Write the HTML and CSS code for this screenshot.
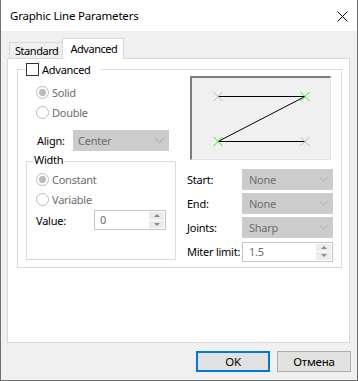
FILE: index.html
```html
<!DOCTYPE html>
<html lang="en">
<head>
    <meta charset="utf-8">
    <title>Graphic Line Parameters</title>
    <link rel="stylesheet" href="styles.css">
</head>
<body>
    <div class="window">
        <div class="titlebar">
            <span class="title">Graphic Line Parameters</span>
            <svg class="close" width="11" height="11" viewBox="0 0 11 11">
                <path d="M0.5 0.5 L10.5 10.5 M10.5 0.5 L0.5 10.5" stroke="#000" stroke-width="1"/>
            </svg>
        </div>
        <div class="client">
            <div class="tabs">
                <div class="tab">Standard</div>
                <div class="tab active">Advanced</div>
            </div>
            <div class="panel">
                <div class="group">
                    <div class="legend">
                        <span class="check"></span>
                        <span>Advanced</span>
                    </div>

                    <div class="col-left">
                        <div class="radios">
                            <div class="radio-row"><span class="radio on"></span><span class="dim">Solid</span></div>
                            <div class="radio-row"><span class="radio"></span><span class="dim">Double</span></div>
                        </div>
                        <div class="align-row">
                            <span class="align-label">Align:</span>
                            <div class="select wide">
                                <span>Center</span>
                                <svg class="chev" width="9" height="5" viewBox="0 0 9 5"><path d="M0.5 0.5 L4.5 4.5 L8.5 0.5" fill="none" stroke="#a6a6a6"/></svg>
                            </div>
                        </div>
                        <div class="subgroup">
                            <div class="sublegend">Width</div>
                            <div class="sub-radios">
                                <div class="radio-row"><span class="radio on"></span><span class="dim">Constant</span></div>
                                <div class="radio-row"><span class="radio"></span><span class="dim">Variable</span></div>
                            </div>
                            <div class="value-row">
                                <span class="value-label">Value:</span>
                                <div class="spin short">
                                    <span class="spin-text">0</span>
                                    <div class="spin-btns">
                                        <span class="up"></span>
                                        <span class="down"></span>
                                    </div>
                                </div>
                            </div>
                        </div>
                    </div>

                    <div class="col-right">
                        <div class="preview">
                            <svg width="138" height="81" viewBox="0 0 138 81">
                                <path d="M26 18.5 H113 L26 63.5 H113" fill="none" stroke="#000" stroke-width="1"/>
                                <g stroke="#a9c9a9" stroke-width="1">
                                    <path d="M21.5 14 L30.5 23 M30.5 14 L21.5 23"/>
                                    <path d="M108.5 59 L117.5 68 M117.5 59 L108.5 68"/>
                                </g>
                                <g stroke="#3ee03e" stroke-width="1">
                                    <path d="M108.5 14 L117.5 23 M117.5 14 L108.5 23"/>
                                    <path d="M21.5 59 L30.5 68 M30.5 59 L21.5 68"/>
                                </g>
                            </svg>
                        </div>
                        <div class="rows">
                            <div class="row">
                                <span class="row-label">Start:</span>
                                <div class="select">
                                    <span>None</span>
                                    <svg class="chev" width="9" height="5" viewBox="0 0 9 5"><path d="M0.5 0.5 L4.5 4.5 L8.5 0.5" fill="none" stroke="#b4b4b4"/></svg>
                                </div>
                            </div>
                            <div class="row">
                                <span class="row-label">End:</span>
                                <div class="select">
                                    <span>None</span>
                                    <svg class="chev" width="9" height="5" viewBox="0 0 9 5"><path d="M0.5 0.5 L4.5 4.5 L8.5 0.5" fill="none" stroke="#b4b4b4"/></svg>
                                </div>
                            </div>
                            <div class="row">
                                <span class="row-label">Joints:</span>
                                <div class="select">
                                    <span>Sharp</span>
                                    <svg class="chev" width="9" height="5" viewBox="0 0 9 5"><path d="M0.5 0.5 L4.5 4.5 L8.5 0.5" fill="none" stroke="#b4b4b4"/></svg>
                                </div>
                            </div>
                            <div class="row">
                                <span class="row-label">Miter limit:</span>
                                <div class="spin">
                                    <span class="spin-text">1.5</span>
                                    <div class="spin-btns">
                                        <span class="up"></span>
                                        <span class="down"></span>
                                    </div>
                                </div>
                            </div>
                        </div>
                    </div>
                </div>
            </div>
            <div class="buttons">
                <button type="button" class="btn default">OK</button>
                <button type="button" class="btn">Отмена</button>
            </div>
        </div>
    </div>
</body>
</html>
```

FILE: styles.css
```css
*
{
    box-sizing: border-box;
}
body
{
    margin: 0;
    font-family: "Noto Sans", "Open Sans", sans-serif;
    font-size: 11px;
    letter-spacing: -0.25px;
    color: #000;
}
.window
{
    width: 358px;
    height: 381px;
    border: 1px solid #717171;
    border-top: none;
    background: #f0f0f0;
    display: flex;
    flex-direction: column;
}
.titlebar
{
    height: 31px;
    background: #fff;
    display: flex;
    align-items: center;
    padding-left: 9px;
    padding-right: 9px;
}
.title
{
    font-size: 11.5px;
    letter-spacing: -0.2px;
}
.close
{
    margin-left: auto;
    margin-top: 1px;
}
.client
{
    flex: 1;
    padding: 7px 6px 0 6px;
}

/* tabs */
.tabs
{
    display: flex;
    align-items: flex-end;
    height: 20px;
    margin-left: 2px;
}
.tab
{
    height: 16px;
    line-height: 15px;
    padding: 0 4px 0 5px;
    border: 1px solid #d9d9d9;
    border-bottom: none;
    background: #f0f0f0;
    letter-spacing: -0.45px;
}
.tab.active
{
    height: 21px;
    line-height: 19px;
    padding: 0 6px 0 7px;
    margin-left: -1px;
    margin-bottom: -1px;
    background: #fff;
    position: relative;
    z-index: 1;
}
.panel
{
    width: 343px;
    height: 285px;
    border: 1px solid #d9d9d9;
    background: #fff;
}

/* main group */
.group
{
    position: relative;
    display: flex;
    width: 325px;
    height: 199px;
    margin: 10px 0 0 9px;
    border: 1px solid #dcdcdc;
}
.legend
{
    position: absolute;
    top: -7px;
    left: 8px;
    height: 13px;
    display: flex;
    align-items: center;
    gap: 3px;
    padding-right: 10px;
    background: #fff;
}
.check
{
    width: 13px;
    height: 13px;
    border: 1px solid #333;
    background: #fff;
}
.col-left
{
    width: 169px;
}
.radios
{
    margin-top: 12px;
    padding-left: 18px;
}
.radio-row
{
    height: 20px;
    display: flex;
    align-items: center;
    gap: 3px;
}
.radio
{
    width: 13px;
    height: 13px;
    border: 1px solid #bcbcbc;
    border-radius: 50%;
    background: #fff;
}
.radio.on
{
    background: radial-gradient(circle, #bcbcbc 0, #bcbcbc 3.3px, #fff 3.8px);
}
.dim
{
    color: #6d6d6d;
}
.align-row
{
    display: flex;
    align-items: center;
    margin-top: 8px;
    padding-left: 19px;
}
.align-label
{
    width: 36px;
}
.select
{
    width: 91px;
    height: 21px;
    display: flex;
    align-items: center;
    padding-left: 6px;
    background: #ccc;
    border: 1px solid #ccc;
    color: #6d6d6d;
}
.select.wide
{
    width: 96px;
    padding-left: 4px;
}
.chev
{
    margin-left: auto;
    margin-right: 4px;
}

/* width group */
.subgroup
{
    position: relative;
    width: 150px;
    height: 99px;
    margin: 10px 0 0 8px;
    border: 1px solid #dcdcdc;
}
.sublegend
{
    position: absolute;
    top: -10px;
    left: 6px;
    line-height: 16px;
    padding: 0 1px;
    background: #fff;
}
.sub-radios
{
    margin-top: 7px;
    padding-left: 9px;
}
.value-row
{
    display: flex;
    align-items: center;
    margin-top: 1px;
    padding-left: 9px;
}
.value-label
{
    width: 58px;
}
.spin
{
    width: 91px;
    height: 20px;
    display: flex;
    border: 1px solid #c6c6c6;
    background: #fff;
}
.spin.short
{
    width: 72px;
}
.spin-text
{
    padding-left: 5px;
    line-height: 18px;
    color: #6d6d6d;
}
.spin-btns
{
    margin-left: auto;
    width: 16px;
    display: flex;
    flex-direction: column;
    padding: 1px 1px 1px 0;
    gap: 1px;
}
.spin-btns span
{
    flex: 1;
    background: #ececec;
    display: flex;
    align-items: center;
    justify-content: center;
}
.spin-btns .up::after
{
    content: "";
    border-left: 3px solid transparent;
    border-right: 3px solid transparent;
    border-bottom: 3px solid #8a8a8a;
}
.spin-btns .down::after
{
    content: "";
    border-left: 3px solid transparent;
    border-right: 3px solid transparent;
    border-top: 3px solid #8a8a8a;
}

/* right column */
.col-right
{
    display: flex;
    flex-direction: column;
}
.preview
{
    width: 141px;
    height: 84px;
    margin: 6px 0 0 3px;
    border-top: 2px solid #7d7d7d;
    border-left: 2px solid #7d7d7d;
    border-right: 1px solid #e3e3e3;
    border-bottom: 1px solid #e3e3e3;
    background: #f0f0f0;
}
.preview svg
{
    display: block;
}
.rows
{
    display: flex;
    flex-direction: column;
    gap: 3px;
    margin-top: 9px;
}
.row
{
    display: flex;
    align-items: center;
    height: 21px;
}
.row-label
{
    width: 55px;
    white-space: nowrap;
}
.rows .spin-text
{
    padding-left: 6px;
}

/* buttons */
.buttons
{
    display: flex;
    justify-content: flex-end;
    gap: 7px;
    margin-top: 8px;
}
.btn
{
    width: 74px;
    height: 21px;
    padding: 0;
    font-family: inherit;
    font-size: 11.5px;
    letter-spacing: -0.2px;
    color: #000;
    background: #e1e1e1;
    border: 1px solid #adadad;
}
.btn.default
{
    border: 2px solid #0078d7;
}
```
